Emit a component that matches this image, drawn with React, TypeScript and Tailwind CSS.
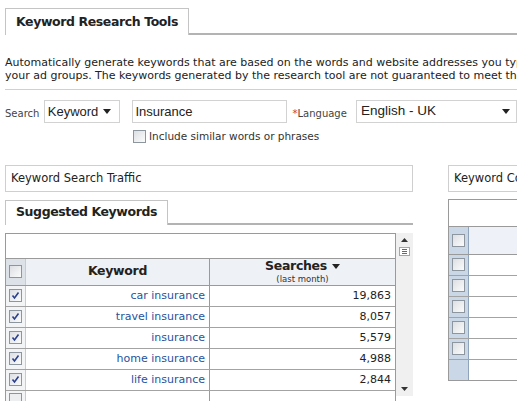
import React from "react";

const rows = [
  { kw: "car insurance", n: "19,863" },
  { kw: "travel insurance", n: "8,057" },
  { kw: "insurance", n: "5,579" },
  { kw: "home insurance", n: "4,988" },
  { kw: "life insurance", n: "2,844" },
];

const arial = { fontFamily: '"Liberation Sans", Arial, sans-serif' };

function Box({ checked = false }: { checked?: boolean }) {
  return (
    <div className="w-[13px] h-[13px] border border-[#8d959e] bg-gradient-to-br from-[#dcdfe3] to-[#fbfbfb] flex items-center justify-center">
      {checked && (
        <svg width="9" height="9" viewBox="0 0 9 9">
          <path d="M1.5 4.5 L3.5 7 L7.5 1.5" fill="none" stroke="#2b3f8f" strokeWidth="1.6" />
        </svg>
      )}
    </div>
  );
}

function Caret() {
  return (
    <svg width="8" height="5" viewBox="0 0 8 5">
      <path d="M0 0 H8 L4 5 Z" fill="#222" />
    </svg>
  );
}

export default function App() {
  return (
    <div
      className="w-[517px] h-[401px] overflow-hidden bg-white text-[#222] whitespace-nowrap"
      style={{ fontFamily: '"DejaVu Sans", Verdana, sans-serif' }}
    >
      {/* top tab */}
      <div className="flex pt-[8px] h-[35px]">
        <div className="ml-[5px] h-[27px] border border-b-0 border-[#c4c4c4] px-[10px] flex items-center text-[12.5px] font-bold tracking-[-0.4px]">
          Keyword Research Tools
        </div>
        <div className="flex-1 border-b-2 border-[#b3b3b3]" />
      </div>

      {/* description */}
      <div className="ml-[5px] mt-[21px] pb-[7px] border-b border-[#d0d0d0] text-[11px] leading-[13px] text-[#222]">
        <div>Automatically generate keywords that are based on the words and website addresses you type</div>
        <div>your ad groups. The keywords generated by the research tool are not guaranteed to meet the</div>
      </div>

      {/* search row */}
      <div className="flex items-center mt-[10px] ml-[5px] h-[23px]">
        <span className="text-[10px] text-[#444] mt-[4px] w-[39px]">Search</span>
        <div
          className="w-[77px] h-[23px] border border-[#d2d2d2] flex items-center justify-between pl-[3px] pr-[8px] text-[13px]"
          style={arial}
        >
          <span>Keyword</span>
          <Caret />
        </div>
        <div
          className="ml-[12px] w-[155px] h-[23px] border border-[#d2d2d2] flex items-center px-[2px] text-[13px]"
          style={arial}
        >
          Insurance
        </div>
        <span className="ml-[6px] text-[10px] text-[#444] mt-[4px]">
          <span className="text-[#e03030]">*</span>Language
        </span>
        <div
          className="ml-[9px] w-[162px] h-[23px] border border-[#d2d2d2] flex items-center justify-between px-[4px] text-[13.5px]"
          style={arial}
        >
          <span>English - UK</span>
          <span className="mr-[2px]"><Caret /></span>
        </div>
      </div>
      <div className="flex items-center ml-[133px] mt-[6px] text-[10.5px] text-[#333]">
        <Box />
        <span className="ml-[3px]">Include similar words or phrases</span>
      </div>

      {/* panels */}
      <div className="flex mt-[20px] ml-[5px]">
        {/* left panel */}
        <div className="w-[408px] shrink-0">
          <div className="h-[27px] border border-[#cfcfcf] flex items-center px-[5px] text-[11.5px]">
            Keyword Search Traffic
          </div>
          <div className="flex mt-[8px] h-[25px]">
            <div className="h-[25px] border border-b-0 border-[#c4c4c4] px-[10px] flex items-center text-[12.5px] font-bold tracking-[-0.4px]">
              Suggested Keywords
            </div>
            <div className="flex-1 border-b-2 border-[#b3b3b3]" />
          </div>
          <div className="flex mt-[8px]">
            <div className="w-[391px] border border-[#9a9a9a] border-b-0">
              <div className="h-[25px] border-b border-[#9a9a9a]" />
              {/* header */}
              <div className="flex h-[27px] border-b border-[#9a9a9a] bg-[#eef1f6]">
                <div className="w-[20px] border-r border-[#c7ccd3] bg-[#dde2e8] flex items-center justify-center">
                  <Box />
                </div>
                <div className="w-[184px] border-r border-[#9a9a9a] flex items-center justify-center text-[12.5px] font-bold tracking-[-0.3px]">
                  Keyword
                </div>
                <div className="flex-1 flex flex-col items-center justify-center leading-none">
                  <div className="flex items-center text-[12.5px] font-bold tracking-[-0.3px]">
                    Searches<span className="ml-[5px]"><Caret /></span>
                  </div>
                  <div className="text-[8.5px] text-[#333] mt-[2px]">(last month)</div>
                </div>
              </div>
              {rows.map((r) => (
                <div key={r.kw} className="flex h-[21px] border-b border-[#a3a3a3]">
                  <div className="w-[20px] border-r border-[#c7ccd3] bg-[#f3f4f6] flex items-center justify-center">
                    <Box checked />
                  </div>
                  <div className="w-[184px] border-r border-[#9a9a9a] flex items-center justify-end pr-[4px] text-[11px] text-[#2553a0]">
                    {r.kw}
                  </div>
                  <div className="flex-1 flex items-center justify-end pr-[4px] text-[11px]">{r.n}</div>
                </div>
              ))}
              <div className="flex h-[12px]">
                <div className="w-[20px] border-r border-[#c7ccd3] bg-[#f3f4f6] flex justify-center pt-[2px]">
                  <div className="w-[13px] h-[10px] border border-b-0 border-[#8d959e] bg-[#eceef0]" />
                </div>
                <div className="w-[184px] border-r border-[#9a9a9a]" />
                <div className="flex-1" />
              </div>
            </div>
            {/* scrollbar */}
            <div className="w-[17px] h-[163px] bg-[#f0f0f0] flex flex-col items-center justify-between py-[5px]">
              <div className="flex flex-col items-center gap-[5px]">
                <svg width="7" height="4" viewBox="0 0 7 4">
                  <path d="M0 4 H7 L3.5 0 Z" fill="#333" />
                </svg>
                <div className="w-[11px] h-[9px] border border-[#9aa] bg-white flex flex-col justify-center gap-[1px] px-[2px]">
                  <div className="h-[1px] bg-[#667]" />
                  <div className="h-[1px] bg-[#667]" />
                  <div className="h-[1px] bg-[#667]" />
                </div>
              </div>
              <svg width="7" height="4" viewBox="0 0 7 4">
                <path d="M0 0 H7 L3.5 4 Z" fill="#333" />
              </svg>
            </div>
          </div>
        </div>

        {/* right panel */}
        <div className="ml-[35px] w-[100px] shrink-0">
          <div className="h-[27px] border border-[#cfcfcf] flex items-center px-[5px] text-[11.5px]">
            Keyword Competition
          </div>
          <div className="mt-[7px] border border-[#9a9a9a]">
            <div className="h-[27px] border-b border-[#9a9a9a]" />
            <div className="flex h-[28px] border-b border-[#9a9a9a] bg-[#eef2f8]">
              <div className="w-[20px] border-r border-[#8fa4bb] bg-[#c9d7e6] flex items-center justify-center">
                <Box />
              </div>
            </div>
            {[0, 1, 2, 3, 4].map((i) => (
              <div key={i} className="flex h-[21px] border-b border-[#a3a3a3]">
                <div className="w-[20px] border-r border-[#8fa4bb] bg-[#c9d7e6] flex items-center justify-center">
                  <Box />
                </div>
              </div>
            ))}
            <div className="flex h-[20px]">
              <div className="w-[20px] border-r border-[#8fa4bb] bg-[#c9d7e6]" />
            </div>
          </div>
        </div>
      </div>
    </div>
  );
}
